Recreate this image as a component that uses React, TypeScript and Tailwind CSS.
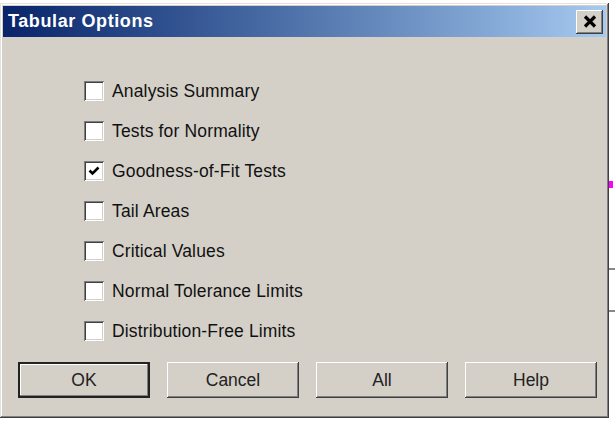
const options = [
  { label: 'Analysis Summary', checked: false },
  { label: 'Tests for Normality', checked: false },
  { label: 'Goodness-of-Fit Tests', checked: true },
  { label: 'Tail Areas', checked: false },
  { label: 'Critical Values', checked: false },
  { label: 'Normal Tolerance Limits', checked: false },
  { label: 'Distribution-Free Limits', checked: false },
];

const buttons = ['OK', 'Cancel', 'All', 'Help'];

function CheckBox({ checked }: { checked: boolean }) {
  return (
    <div className="flex h-[20px] w-[20px] items-center justify-center bg-white shadow-[inset_1px_1px_#808080,inset_-1px_-1px_#ffffff,inset_2px_2px_#404040,inset_-2px_-2px_#d4d0c8]">
      {checked && (
        <svg width="12" height="12" viewBox="0 0 12 12">
          <path d="M1.5 5.5 L4.5 8.5 L10.5 2.5" fill="none" stroke="#000" strokeWidth="2.6" />
        </svg>
      )}
    </div>
  );
}

export default function App() {
  return (
    <div className="flex h-[421px] w-[615px] bg-white font-['Liberation_Sans',Arial,sans-serif]">
      <div className="mt-[3px] flex h-[415px] w-[609px] flex-col bg-[#d4d0c8] p-[3px] shadow-[inset_-1px_-1px_#404040,inset_1px_1px_#e4e2dc,inset_-2px_-2px_#808080,inset_2px_2px_#ffffff]">
        <div className="flex h-[31px] items-center justify-between bg-gradient-to-r from-[#0a246a] to-[#a6caf0] pl-[5px] pr-[3px]">
          <span className="text-[18px] font-bold tracking-[0.6px] text-white">Tabular Options</span>
          <div className="flex h-[24px] w-[27px] items-center justify-center bg-[#d4d0c8] shadow-[inset_-1px_-1px_#404040,inset_1px_1px_#ffffff,inset_-2px_-2px_#808080]">
            <svg width="14" height="13" viewBox="0 0 14 13">
              <path d="M2 1.5 L12 11.5 M12 1.5 L2 11.5" stroke="#000" strokeWidth="3.2" />
            </svg>
          </div>
        </div>

        <div className="flex flex-col pl-[81px] pt-[34px]">
          {options.map((o) => (
            <div key={o.label} className="flex h-[40px] items-center gap-[8px]">
              <CheckBox checked={o.checked} />
              <span className="text-[17.5px] tracking-[0.15px] text-[#111]">{o.label}</span>
            </div>
          ))}
        </div>

        <div className="mt-[11px] flex gap-[17px] pl-[15px]">
          {buttons.map((b) => (
            <div
              key={b}
              className={
                b === 'OK'
                  ? 'flex h-[36px] w-[132px] items-center justify-center border-2 border-[#222] bg-[#d4d0c8] text-[17.5px] text-[#222] shadow-[inset_-1px_-1px_#808080,inset_1px_1px_#ffffff]'
                  : 'flex h-[36px] w-[132px] items-center justify-center bg-[#d4d0c8] text-[17.5px] text-[#222] shadow-[inset_-1px_-1px_#404040,inset_1px_1px_#ffffff,inset_-2px_-2px_#808080]'
              }
            >
              {b}
            </div>
          ))}
        </div>
      </div>

      <div className="flex flex-1 flex-col pt-[181px]">
        <div className="h-[7px] w-[4px] bg-[#ff00ff]" />
        <div className="mt-[80px] h-[2px] w-[6px] bg-[#888]" />
        <div className="mt-[40px] h-[2px] w-[6px] bg-[#888]" />
      </div>
    </div>
  );
}
